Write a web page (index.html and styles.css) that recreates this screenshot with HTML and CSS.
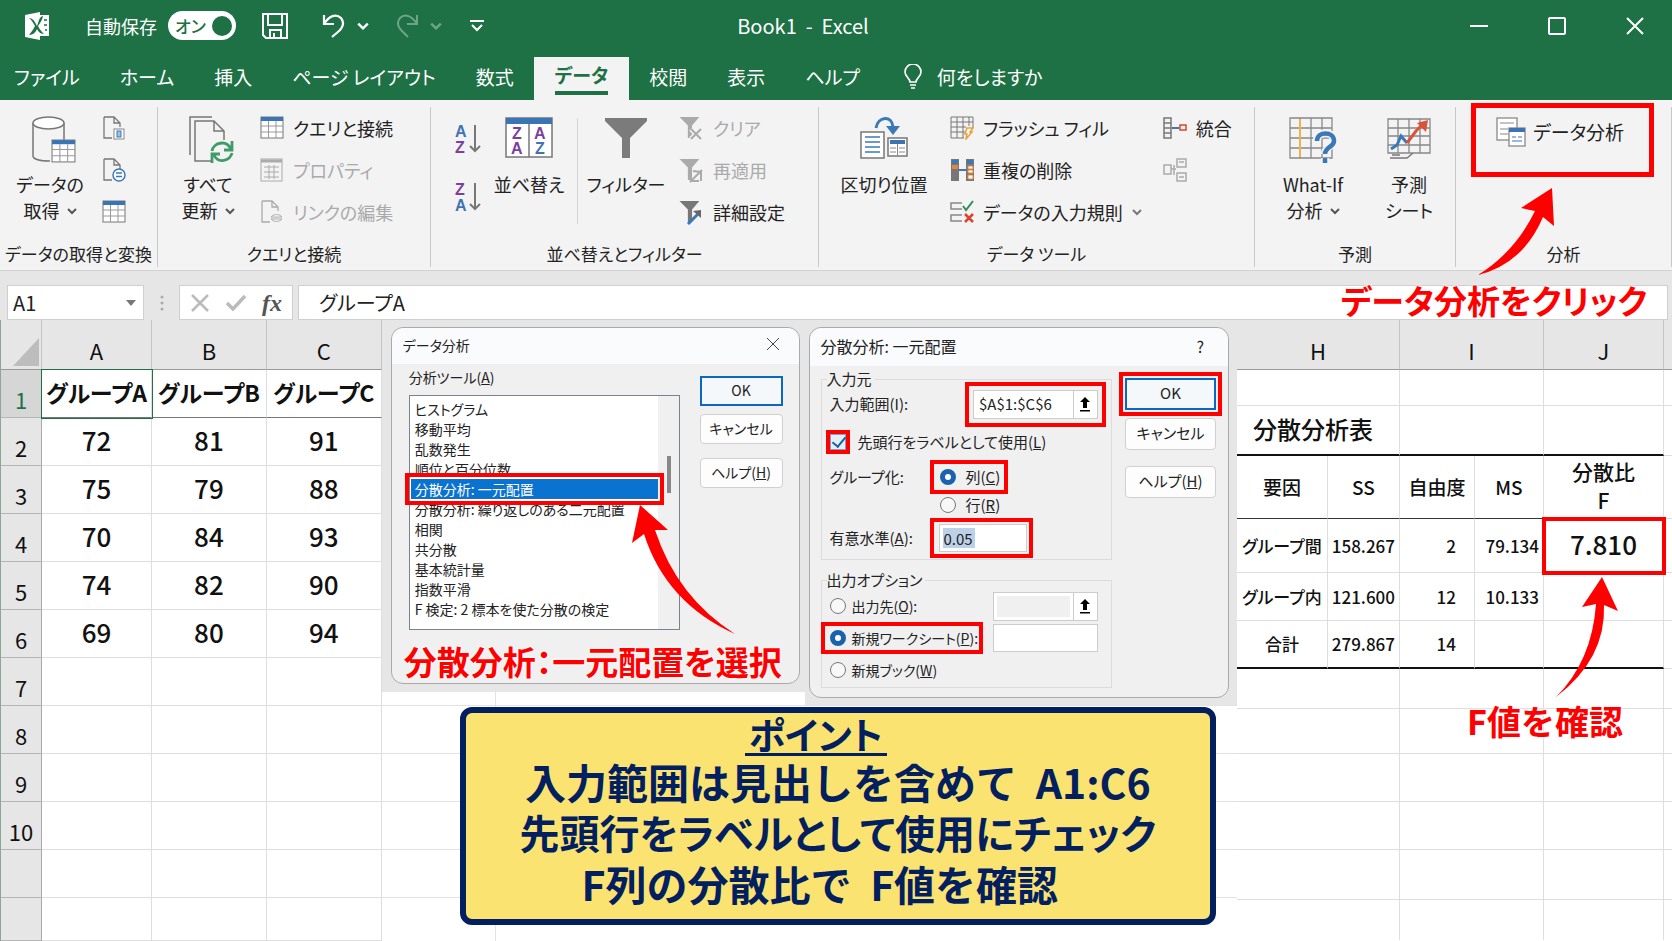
FILE: index.html
```html
<!DOCTYPE html>
<html lang="ja">
<head>
<meta charset="UTF-8">
<meta name="viewport" content="width=device-width, initial-scale=1.0">
<title>Book1 - Excel</title>
<link rel="stylesheet" href="styles.css">
</head>
<body>
<!-- shared icons -->
<svg class="defs" width="0" height="0">
    <symbol id="chev" viewBox="0 0 10 8"><path d="M1 2l4 4 4-4" fill="none" stroke="currentColor" stroke-width="2"/></symbol>
    <symbol id="table" viewBox="0 0 24 24">
        <rect x="1" y="1" width="22" height="21" fill="#fff" stroke="#777"/>
        <path d="M1 10h22M1 16h22M8.500 5v17M16 5v17" stroke="#999" fill="none"/>
        <rect x="1" y="1" width="22" height="4" fill="#3b74b5"/>
    </symbol>
    <symbol id="page" viewBox="0 0 24 24"><path d="M2 1h10l6 6v4M12 1v6h6M2 1v21h8" fill="none" stroke="currentColor" stroke-width="1.300"/></symbol>
    <symbol id="funnel" viewBox="0 0 24 24"><path d="M1 1h19l-7 8v12H9V9z" fill="currentColor"/></symbol>
    <symbol id="up" viewBox="0 0 14 16"><path d="M7 1l5 5H9v6H5V6H2zM2 14h10v1.500H2z" fill="#000"/></symbol>
</svg>

<header class="top">
    <div class="titlebar">
        <svg class="logo" width="26" height="28" viewBox="0 0 26 28"><path d="M1 3L16 0v3h9v21h-9v4L1 25z" fill="#fff"/><path d="M5 6c4 0 6 4 8 8 2-5 2-9 6-10-1 5-3 7-5 10 2 4 4 6 6 8-4 0-6-3-7-5-1 3-4 6-8 6 2-3 4-5 6-9C9 11 8 8 5 6z" fill="#1e7145"/><path d="M20 8h3M20 13h3M21 18h2" stroke="#1e7145" stroke-width="1.500"/></svg>
        <span class="autosave">自動保存</span>
        <button class="toggle" aria-pressed="true">オン<span class="knob"></span></button>
        <button class="quick save" aria-label="上書き保存"><svg width="26" height="26" viewBox="0 0 26 26" fill="none" stroke="#fff" stroke-width="2"><path d="M1 1h24v24H4l-3-3z"/><path d="M6 1v11h14V1M8 25v-8h11v8M12 20v5"/></svg></button>
        <button class="quick" aria-label="元に戻す"><svg width="24" height="26" viewBox="0 0 24 26" fill="none" stroke="#fff" stroke-width="2.200"><path d="M2 2v9h10"/><path d="M2 11C7 3 14 0 19 5c4 5 2 9-2 13l-7 6"/></svg></button>
        <button class="quick arrow" aria-label="元に戻す一覧"><svg width="12" height="10"><use href="#chev"/></svg></button>
        <button class="quick redo" aria-label="やり直し" disabled><svg width="24" height="26" viewBox="0 0 24 26" fill="none" stroke="#6fa486" stroke-width="2"><path d="M22 2v9H12"/><path d="M22 11C17 3 10 0 5 5c-4 5-2 9 2 13l6 6"/></svg></button>
        <button class="quick arrow" aria-label="やり直し一覧" disabled><svg width="12" height="10"><use href="#chev"/></svg></button>
        <button class="quick more" aria-label="クイック アクセスのカスタマイズ"><svg width="14" height="14" viewBox="0 0 14 14" fill="none" stroke="#fff" stroke-width="2"><path d="M0 2h14M2 6l5 5 5-5"/></svg></button>
        <div class="book">Book1&nbsp; -&nbsp; Excel</div>
        <div class="winbuttons">
            <button aria-label="最小化"><svg width="18" height="18"><path d="M0 9h18" stroke="#fff" stroke-width="2"/></svg></button>
            <button aria-label="最大化"><svg width="18" height="18"><rect x="1" y="1" width="16" height="16" rx="1" fill="none" stroke="#fff" stroke-width="2"/></svg></button>
            <button aria-label="閉じる"><svg width="18" height="18"><path d="M1 1l16 16M17 1L1 17" stroke="#fff" stroke-width="2"/></svg></button>
        </div>
    </div>
    <nav class="tabs">
        <a href="#">ファイル</a>
        <a href="#">ホーム</a>
        <a href="#">挿入</a>
        <a href="#">ページ レイアウト</a>
        <a href="#">数式</a>
        <a href="#" class="active"><span>データ</span></a>
        <a href="#">校閲</a>
        <a href="#">表示</a>
        <a href="#">ヘルプ</a>
        <a href="#" class="tell"><svg width="18" height="25" viewBox="0 0 18 25" fill="none" stroke="#fff" stroke-width="1.600"><path d="M6 18c0-4-5-5-5-10a8 8 0 0 1 16 0c0 5-5 6-5 10zM6 21h6M7 24h4"/></svg>何をしますか</a>
    </nav>
</header>

<section class="ribbon">
    <div class="group get">
        <div class="tools">
            <button class="big">
                <svg width="44" height="48" viewBox="0 0 44 48"><path d="M1 7v33c0 3 7 5 17 5M32 7v17" fill="none" stroke="#777" stroke-width="1.500"/><ellipse cx="16.500" cy="7" rx="15.500" ry="6" fill="#fff" stroke="#777" stroke-width="1.500"/><svg x="19" y="23" width="25" height="25"><use href="#table"/></svg></svg>
                <span>データの</span><span>取得 <svg class="chev" width="10" height="8"><use href="#chev"/></svg></span>
            </button>
            <div class="list">
                <button aria-label="テキストから"><svg width="24" height="24" viewBox="0 0 24 24"><use href="#page"/><rect x="12" y="13" width="10" height="10" fill="#fff" stroke="#888"/><rect x="15" y="15" width="4" height="6" fill="#9cc3ea" stroke="#3b78b8"/></svg></button>
                <button aria-label="Web から"><svg width="24" height="24" viewBox="0 0 24 24"><use href="#page"/><circle cx="17" cy="17" r="6" fill="#fff" stroke="#3b78b8" stroke-width="1.500"/><path d="M14 15h6M14 18.500h6" stroke="#3b78b8" stroke-width="1.500"/></svg></button>
                <button aria-label="テーブルから"><svg width="24" height="24"><use href="#table"/></svg></button>
            </div>
        </div>
        <div class="caption">データの取得と変換</div>
    </div>

    <div class="group query">
        <div class="tools">
            <button class="big">
                <svg width="46" height="48" viewBox="0 0 46 48" fill="none" stroke="#777" stroke-width="1.500"><path d="M1 39V1h22"/><path d="M22 45H6V5h19l10 10v9M25 5v10h10"/><path d="M23 35c1-8 14-12 19-2M43 25v9h-8M43 37c-2 8-14 11-18 2M23 47v-9h8" stroke="#3f9b68" stroke-width="2.800"/></svg>
                <span>すべて</span><span>更新 <svg class="chev" width="10" height="8"><use href="#chev"/></svg></span>
            </button>
            <div class="list">
                <button><svg width="24" height="24"><use href="#table"/></svg>クエリと接続</button>
                <button disabled><svg width="24" height="24" viewBox="0 0 24 24" fill="none" stroke="#aaa"><rect x="1" y="1" width="21" height="22"/><path d="M1 3h21" stroke-width="3"/><path d="M4 9h15M4 14h15M4 19h15M9 7v14M14 7v14"/></svg>プロパティ</button>
                <button disabled><svg width="24" height="24" viewBox="0 0 24 24"><use href="#page"/><path d="M11 17a6 4 0 0 1 11 0zM11 19a6 4 0 0 0 11 0z" fill="#fff" stroke="#aaa"/></svg>リンクの編集</button>
            </div>
        </div>
        <div class="caption">クエリと接続</div>
    </div>

    <div class="group sort">
        <div class="tools">
            <div class="list orders">
                <button aria-label="昇順"><svg width="26" height="32" viewBox="0 0 26 32"><text x="0" y="14" fill="#3f74b5">A</text><text x="0" y="30" fill="#7b3fa0">Z</text><path d="M20 2v26M15 23l5 5 5-5" fill="none" stroke="#777" stroke-width="2"/></svg></button>
                <button aria-label="降順"><svg width="26" height="32" viewBox="0 0 26 32"><text x="0" y="14" fill="#7b3fa0">Z</text><text x="0" y="30" fill="#3f74b5">A</text><path d="M20 2v26M15 23l5 5 5-5" fill="none" stroke="#777" stroke-width="2"/></svg></button>
            </div>
            <button class="big">
                <svg width="48" height="48" viewBox="0 0 48 48"><rect x="1" y="2" width="46" height="39" fill="#fff" stroke="#777" stroke-width="1.500"/><path d="M1 5h46" stroke="#3b74b5" stroke-width="6"/><path d="M24 8v33" stroke="#777" stroke-width="1.500"/><text x="7" y="23" fill="#7b3fa0">Z</text><text x="6" y="38" fill="#7b3fa0">A</text><text x="29" y="23" fill="#7b3fa0">A</text><text x="30" y="38" fill="#3f74b5">Z</text></svg>
                <span>並べ替え</span>
            </button>
            <span class="rule"></span>
            <button class="big">
                <svg width="44" height="48" viewBox="0 0 44 48"><path d="M1 2h42v3L26 22v20h-8V22L1 5z" fill="#7b7b7b"/></svg>
                <span>フィルター</span>
            </button>
            <div class="list filters">
                <button disabled><svg width="26" height="25" viewBox="0 0 26 25"><use href="#funnel"/><path d="M13 13l10 10M23 13L13 23" stroke="#f3f3f3" stroke-width="5"/><path d="M13 13l10 10M23 13L13 23" stroke="#aaa" stroke-width="2"/></svg>クリア</button>
                <button disabled><svg width="26" height="25" viewBox="0 0 26 25"><use href="#funnel"/><path d="M12 24l12-12M15 13l8 1v9M13 16v7h8" fill="none" stroke="#aaa" stroke-width="2"/></svg>再適用</button>
                <button><svg width="26" height="25" viewBox="0 0 26 25"><use href="#funnel"/><path d="M10 24L21 13" stroke="#3b78b8" stroke-width="3"/><path d="M15 11l8-1v8z" fill="#666"/></svg>詳細設定</button>
            </div>
        </div>
        <div class="caption">並べ替えとフィルター</div>
    </div>

    <div class="group datatools">
        <div class="tools">
            <button class="big">
                <svg width="48" height="48" viewBox="0 0 48 48" fill="none"><path d="M16 12C18 0 32-1 33 11" stroke="#3b78b8" stroke-width="3"/><path d="M26 10h14l-7 9z" fill="#3b78b8"/><rect x="1" y="16" width="23" height="26" fill="#fff" stroke="#777" stroke-width="1.500"/><path d="M5 21h15M5 26h15M5 31h15M5 36h15" stroke="#3b78b8" stroke-width="1.500"/><rect x="28" y="22" width="19" height="18" fill="#fff" stroke="#777" stroke-width="1.500"/><path d="M30 26h15" stroke="#3b74b5" stroke-width="4"/><path d="M30 32h6M39 32h6M30 36h6M39 36h6M37.500 28v11" stroke="#888"/></svg>
                <span>区切り位置</span>
            </button>
            <div class="list">
                <button><svg width="24" height="24" viewBox="0 0 24 24" fill="none" stroke="#777"><path d="M1 1h22v11M14 22H1V1M1 6h22M1 11h15M1 16h14M7 1v21M13 1v21M19 1v9"/><path d="M17 12h6l-3 4h2l-6 7 1-5h-2z" fill="#fff" stroke="#eaa13b" stroke-width="1.500"/></svg>フラッシュ フィル</button>
                <button><svg width="24" height="24" viewBox="0 0 24 24"><path d="M1 1h8v22H1zM16 1h8v22h-8z" fill="#777"/><path d="M2 2h6v4H2zM17 2h6v4h-6z" fill="#3b78b8"/><path d="M2 7h6v4H2z" fill="#e8833a"/><path d="M18 8h5v3h-5zM18 12h5v3h-5zM18 17h5v4h-5z" fill="#fff" stroke="#e8833a"/><path d="M9 12h7" stroke="#3b78b8" stroke-width="2"/></svg>重複の削除</button>
                <button><svg width="24" height="24" viewBox="0 0 24 24" fill="none"><path d="M12 3H1v6h11M12 15H1v6h11" stroke="#888" stroke-width="1.500"/><path d="M13 6l3 4 7-9" stroke="#2f8f57" stroke-width="2"/><path d="M15 14l8 8M23 14l-8 8" stroke="#d9462f" stroke-width="2.500"/></svg>データの入力規則 <svg class="chev" width="10" height="8"><use href="#chev"/></svg></button>
            </div>
            <div class="list">
                <button><svg width="24" height="24" viewBox="0 0 24 24" fill="none"><path d="M1 2h7v20H1zM1 7h7M1 12h7M1 17h7" stroke="#777" stroke-width="1.500"/><path d="M9 12h7" stroke="#3b78b8" stroke-width="2"/><rect x="17" y="9" width="6" height="5" stroke="#d9462f" stroke-width="1.500"/></svg>統合</button>
                <button disabled aria-label="リレーションシップ"><svg width="24" height="24" viewBox="0 0 24 24" fill="none" stroke="#aaa" stroke-width="1.500"><rect x="1" y="7" width="7" height="9"/><rect x="14" y="1" width="9" height="8"/><rect x="14" y="15" width="9" height="8"/><path d="M8 11h5M11 7v10M16 4h5M16 19h5"/></svg></button>
            </div>
        </div>
        <div class="caption">データ ツール</div>
    </div>

    <div class="group forecast">
        <div class="tools">
            <button class="big">
                <svg width="48" height="48" viewBox="0 0 48 48" fill="none"><path d="M1 2h42v40H1zM1 12h42M1 22h42M1 32h42M11 2v40M22 2v40M33 2v40" stroke="#888" stroke-width="1.300"/><path d="M11 3v38" stroke="#f0b04e" stroke-width="2"/><path d="M28 24c0-9 17-9 17 0 0 6-9 6-9 14M36 42v5" stroke="#f3f3f3" stroke-width="8"/><path d="M28 25c0-10 17-10 17 0 0 6-9 6-9 13M36 42v5" stroke="#3b78b8" stroke-width="4.500"/></svg>
                <span>What-If</span><span>分析 <svg class="chev" width="10" height="8"><use href="#chev"/></svg></span>
            </button>
            <button class="big narrow">
                <svg width="44" height="48" viewBox="0 0 44 48" fill="none"><path d="M1 3h42v34H1zM1 12h42M1 20h42M1 29h42M11 3v34M22 3v34M33 3v34" stroke="#888" stroke-width="1.300"/><path d="M4 33l6-4 4-9 6 7" stroke="#3b78b8" stroke-width="3"/><path d="M20 27l9-12 8-8" stroke="#d9533a" stroke-width="3"/><path d="M30 7l11-3-2 12z" fill="#d9533a"/><path d="M3 42h17l6-5M5 39h8" stroke="#777" stroke-width="1.500"/></svg>
                <span>予測</span><span>シート</span>
            </button>
        </div>
        <div class="caption">予測</div>
    </div>

    <div class="group analysis">
        <div class="tools">
            <button class="analyze"><svg width="30" height="30" viewBox="0 0 30 30" fill="none"><rect x="1" y="1" width="20" height="22" fill="#fff" stroke="#888" stroke-width="1.300"/><path d="M4 6h14M4 12h8M4 17h8" stroke="#888"/><rect x="13" y="11" width="16" height="18" fill="#fff" stroke="#888" stroke-width="1.300"/><path d="M13 13h16" stroke="#3b74b5" stroke-width="4"/><path d="M16 20h4M22 20h4M16 24h10" stroke="#3b74b5"/></svg>データ分析</button>
        </div>
        <div class="caption">分析</div>
        <svg class="pointer to-analysis" width="78" height="90" viewBox="0 0 78 90"><path d="M74 0L43 20l14 3Q37 64 0 87 45 76 65 29l11 9z"/></svg>
    </div>
</section>

<section class="formulabar">
    <div class="namebox"><input type="text" value="A1" aria-label="名前ボックス"><svg width="10" height="6"><path d="M0 0h10L5 6z" fill="#777"/></svg></div>
    <svg class="dots" width="4" height="18" fill="#aaa"><circle cx="2" cy="3" r="1.500"/><circle cx="2" cy="9" r="1.500"/><circle cx="2" cy="15" r="1.500"/></svg>
    <div class="fxbox">
        <button aria-label="キャンセル"><svg width="20" height="18"><path d="M2 1l16 16M18 1L2 17" stroke="#bbb" stroke-width="2.500"/></svg></button>
        <button aria-label="入力"><svg width="22" height="18"><path d="M2 9l6 6L20 2" fill="none" stroke="#bbb" stroke-width="3.500"/></svg></button>
        <button class="fx">fx</button>
    </div>
    <input class="formula" type="text" value="グループA" aria-label="数式バー">
    <div class="note note-analysis">データ分析をクリック</div>
</section>

<main class="sheet">
    <table class="cells">
        <thead>
            <tr><th class="corner"><svg width="26" height="28"><path d="M26 0v28H0z" fill="#bdbdbd"/></svg></th><th>A</th><th>B</th><th>C</th></tr>
        </thead>
        <tbody>
            <tr class="first"><th>1</th><td class="selected">グループA</td><td>グループB</td><td>グループC</td></tr>
            <tr><th>2</th><td>72</td><td>81</td><td>91</td></tr>
            <tr><th>3</th><td>75</td><td>79</td><td>88</td></tr>
            <tr><th>4</th><td>70</td><td>84</td><td>93</td></tr>
            <tr><th>5</th><td>74</td><td>82</td><td>90</td></tr>
            <tr><th>6</th><td>69</td><td>80</td><td>94</td></tr>
            <tr><th>7</th><td></td><td></td><td></td></tr>
            <tr><th>8</th><td></td><td></td><td></td></tr>
            <tr><th>9</th><td></td><td></td><td></td></tr>
            <tr><th>10</th><td></td><td></td><td></td></tr>
            <tr><th></th><td></td><td></td><td></td></tr>
            <tr class="last"><th></th><td></td><td></td><td></td></tr>
        </tbody>
    </table>

    <div class="middle">
        <div class="windows">
            <div class="backdrop one">
                <div class="dialog">
                    <div class="dialog-title">データ分析<button aria-label="閉じる"><svg width="14" height="14"><path d="M1 1l12 12M13 1L1 13" stroke="#444"/></svg></button></div>
                    <div class="dialog-body">
                        <div class="chooser">
                            <div id="tools-label">分析ツール(<u>A</u>)</div>
                            <div class="listbox">
                                <ul role="listbox" aria-labelledby="tools-label">
                                    <li role="option">ヒストグラム</li>
                                    <li role="option">移動平均</li>
                                    <li role="option">乱数発生</li>
                                    <li role="option">順位と百分位数</li>
                                    <li role="option" class="picked" aria-selected="true">分散分析: 一元配置</li>
                                    <li role="option">分散分析: 繰り返しのある二元配置</li>
                                    <li role="option">相関</li>
                                    <li role="option">共分散</li>
                                    <li role="option">基本統計量</li>
                                    <li role="option">指数平滑</li>
                                    <li role="option">F 検定: 2 標本を使た分散の検定</li>
                                </ul>
                                <div class="scroll"><span></span></div>
                            </div>
                        </div>
                        <div class="actions">
                            <button class="default">OK</button>
                            <button>キャンセル</button>
                            <button class="help">ヘルプ(<u>H</u>)</button>
                        </div>
                    </div>
                    <div class="note note-choose">分散分析：一元配置を選択</div>
                    <svg class="pointer to-list" width="104" height="130" viewBox="0 0 104 130"><path d="M8 0L0 38l12-9Q34 98 103 129 45 92 23 25h13z"/></svg>
                </div>
            </div>

            <div class="backdrop two">
                <div class="dialog anova">
                    <div class="dialog-title">分散分析: 一元配置<button aria-label="ヘルプ">?</button></div>
                    <div class="dialog-body">
                        <div class="options">
                            <fieldset>
                                <legend>入力元</legend>
                                <div class="row range">
                                    <label for="range">入力範囲(I):</label>
                                    <span class="ref marked"><input id="range" type="text" value="$A$1:$C$6"><button aria-label="範囲を選択"><svg width="14" height="16"><use href="#up"/></svg></button></span>
                                </div>
                                <div class="row labels"><input class="marked" id="labels" type="checkbox" checked><label for="labels">先頭行をラベルとして使用(<u>L</u>)</label></div>
                                <div class="row by"><span class="name">グループ化:</span><label class="choice marked"><input type="radio" name="by" checked><span>列(<u>C</u>)</span></label></div>
                                <div class="row by rows"><span class="name"></span><label class="choice"><input type="radio" name="by"><span>行(<u>R</u>)</span></label></div>
                                <div class="row alpha"><label class="name" for="alpha">有意水準(<u>A</u>):</label><span class="level marked"><input id="alpha" type="text" value="0.05"></span></div>
                            </fieldset>
                            <fieldset class="output">
                                <legend>出力オプション</legend>
                                <div class="row"><label><input type="radio" name="out">出力先(<u>O</u>):</label><span class="ref dim"><input type="text" aria-label="出力先"><button aria-label="出力先を選択"><svg width="14" height="16"><use href="#up"/></svg></button></span></div>
                                <div class="row"><label class="marked"><input type="radio" name="out" checked>新規ワークシート(<u>P</u>):</label><input class="sheetname" type="text" aria-label="シート名"></div>
                                <div class="row"><label><input type="radio" name="out">新規ブック(<u>W</u>)</label></div>
                            </fieldset>
                        </div>
                        <div class="actions">
                            <button class="default marked">OK</button>
                            <button>キャンセル</button>
                            <button class="help">ヘルプ(<u>H</u>)</button>
                        </div>
                    </div>
                </div>
            </div>
        </div>

        <div class="point">
            <h2><span>ポイント</span></h2>
            <p class="wide">入力範囲は見出しを含めて&nbsp; A1:C6</p>
            <p>先頭行をラベルとして使用にチェック</p>
            <p class="wide check">F列の分散比で&nbsp; F値を確認</p>
        </div>
    </div>

    <div class="result">
        <table class="anova-table">
            <colgroup><col class="c1"><col class="c2"><col class="c3"><col class="c4"><col class="c5"><col class="c6"></colgroup>
            <thead>
                <tr><th colspan="2">H</th><th colspan="2">I</th><th>J</th><th></th></tr>
            </thead>
            <tbody>
                <tr class="h36"><td colspan="2"></td><td colspan="2"></td><td></td><td></td></tr>
                <tr class="h50 heading"><td colspan="2">分散分析表</td><td colspan="2"></td><td></td><td></td></tr>
                <tr class="h63 names"><td>要因</td><td>SS</td><td>自由度</td><td>MS</td><td class="ratio">分散比<br>F</td><td></td></tr>
                <tr class="h54 data"><td>グループ間</td><td>158.267</td><td>2</td><td>79.134</td><td class="fvalue marked">7.810</td><td></td></tr>
                <tr class="h48 data"><td>グループ内</td><td>121.600</td><td>12</td><td>10.133</td><td></td><td></td></tr>
                <tr class="h48 data total"><td>合計</td><td>279.867</td><td>14</td><td></td><td></td><td></td></tr>
                <tr class="h40"><td colspan="2"></td><td colspan="2"></td><td></td><td></td></tr>
                <tr class="h45"><td colspan="2"></td><td colspan="2"></td><td></td><td></td></tr>
                <tr class="h48"><td colspan="2"></td><td colspan="2"></td><td></td><td></td></tr>
                <tr class="h48"><td colspan="2"></td><td colspan="2"></td><td></td><td></td></tr>
                <tr class="h50"><td colspan="2"></td><td colspan="2"></td><td></td><td></td></tr>
                <tr class="h40 end"><td colspan="2"></td><td colspan="2"></td><td></td><td></td></tr>
            </tbody>
        </table>
        <svg class="pointer to-f" width="64" height="122" viewBox="0 0 64 122"><path d="M46 0L26 30l14-3Q36 84 0 120 50 82 48 28l14 6z"/></svg>
        <div class="note note-f">F値を確認</div>
    </div>
</main>
</body>
</html>
```

FILE: styles.css
```css
* {
    box-sizing: border-box;
}

body {
    margin: 0;
    min-height: 100vh;
    display: flex;
    flex-direction: column;
    background: #fff;
    color: #222;
    font-family: "Noto Sans CJK JP", sans-serif;
    font-size: 18px;
    font-feature-settings: "palt";
    overflow-x: hidden;
}

.defs {
    position: absolute;
}

button, input {
    font: inherit;
    font-feature-settings: inherit;
    color: inherit;
    margin: 0;
    padding: 0;
    border: 0;
    background: none;
}

svg {
    flex: none;
}

svg text {
    font-family: "Liberation Sans", sans-serif;
    font-size: 16px;
    font-weight: bold;
}

/* red annotations */
.marked {
    outline: 4px solid #f00;
}

.note {
    color: #f00;
    font-size: 33px;
    line-height: 40px;
    font-weight: 700;
    white-space: nowrap;
    text-shadow: 0 0 3px #fff, 0 0 3px #fff;
}

.pointer {
    position: absolute;
    fill: #f00;
    z-index: 2;
}

/* title bar and tabs */
.top {
    background: #1e7145;
    color: #fff;
}

.titlebar {
    position: relative;
    display: flex;
    align-items: center;
    height: 57px;
    padding: 0 28px 6px 24px;
}

.autosave {
    margin-left: 35px;
    white-space: nowrap;
}

.toggle {
    display: flex;
    align-items: center;
    gap: 6px;
    width: 68px;
    height: 29px;
    margin-left: 11px;
    padding-left: 7px;
    border-radius: 15px;
    background: #fff;
    color: #1e7145;
    font-size: 17px;
    font-weight: 500;
    white-space: nowrap;
}

.knob {
    flex: none;
    width: 20px;
    height: 20px;
    border-radius: 50%;
    background: #1e7145;
}

.quick {
    display: flex;
    margin-left: 34px;
    color: #fff;
}

.quick.save {
    margin-left: 26px;
}

.quick.arrow {
    margin-left: 11px;
}

.quick.redo {
    margin-left: 26px;
}

.quick:disabled {
    color: #6fa486;
}

.quick.more {
    margin-left: 28px;
}

.book {
    position: absolute;
    left: 0;
    right: 0;
    width: max-content;
    padding-right: 66px;
    margin: auto;
    font-size: 20px;
}

.winbuttons {
    display: flex;
    gap: 60px;
    margin-left: auto;
}

.winbuttons svg {
    display: block;
}

.tabs {
    display: flex;
    height: 43px;
}

.tabs a {
    display: flex;
    align-items: center;
    padding: 0 20px 4px;
    color: #fff;
    font-size: 19px;
    line-height: 36px;
    text-decoration: none;
    white-space: nowrap;
}

.tabs a:first-child {
    padding-left: 14px;
}

.tabs .active {
    padding: 0 21px 4px;
    background: #f3f3f3;
    color: #1e7145;
    font-weight: 700;
}

.active span {
    line-height: 32px;
    border-bottom: 4px solid #1e7145;
}

.tabs .tell {
    gap: 15px;
    padding-left: 24px;
}

/* ribbon */
.ribbon {
    display: grid;
    grid-template-columns: 158fr 273fr 388fr 436fr 201fr 216fr;
    padding: 7px 0 3px;
    background: #f3f3f3;
    border-bottom: 1px solid #d2d2d2;
}

.group {
    position: relative;
    border-right: 1px solid #c8c8c8;
    min-width: 0;
}

.tools {
    display: flex;
    height: 134px;
    gap: 16px;
    padding-left: 14px;
}

.caption {
    line-height: 26px;
    font-size: 17px;
    text-align: center;
    white-space: nowrap;
}

.big {
    display: flex;
    flex-direction: column;
    align-items: center;
    flex: none;
    width: 72px;
    padding-top: 9px;
    line-height: 26px;
    white-space: nowrap;
}

.big > svg {
    margin-bottom: 7px;
}

.get .big > svg, .query .big > svg {
    margin-left: 8px;
}

.chev {
    color: #555;
    margin-left: 3px;
    vertical-align: 3px;
}

.list {
    flex: none;
    display: flex;
    flex-direction: column;
}

.list button {
    display: flex;
    align-items: center;
    gap: 9px;
    height: 42px;
    white-space: nowrap;
    color: #222;
}

.list button svg {
    color: #777;
}

.list button:disabled, .list button:disabled svg {
    color: #aaa;
}

.list .chev {
    margin-left: 0;
}

.sort .tools {
    gap: 8px;
    padding-left: 24px;
}

.sort .big {
    width: 80px;
}

.orders {
    padding-top: 4px;
    gap: 2px;
}

.list.orders button {
    height: 56px;
}

.filters {
    margin-left: 4px;
}

.rule {
    width: 1px;
    height: 106px;
    margin-top: 11px;
    background: #d5d5d5;
}

.datatools .tools {
    gap: 21px;
    padding-left: 20px;
}

.datatools .big {
    width: 90px;
}

.forecast .tools {
    gap: 26px;
    padding-left: 18px;
}

.forecast .big {
    width: 80px;
}

.forecast .narrow {
    width: 60px;
}

.analysis .tools {
    padding: 1px 22px 0 20px;
}

.analyze {
    display: flex;
    align-items: flex-start;
    gap: 7px;
    flex: 1;
    height: 64px;
    padding: 9px 0 0 20px;
    line-height: 30px;
    font-size: 19px;
    white-space: nowrap;
    outline: 5px solid #f00;
}

.to-analysis {
    right: 115px;
    top: 81px;
}

/* formula bar */
.formulabar {
    position: relative;
    display: flex;
    align-items: center;
    height: 49px;
    padding: 14px 4px 0 7px;
    background: #e6e6e6;
    font-size: 20px;
}

.namebox, .fxbox, .formula {
    height: 35px;
    background: #fff;
    border: 1px solid #cfcfcf;
}

.namebox {
    display: flex;
    align-items: center;
    width: 137px;
    padding: 0 7px 0 5px;
}

.namebox input {
    width: 100%;
    font-size: 20px;
}

.dots {
    margin: 0 15px 0 16px;
}

.fxbox {
    display: flex;
    align-items: center;
    justify-content: space-between;
    width: 114px;
    padding: 0 10px;
}

.fxbox svg {
    display: block;
}

.fx {
    font: italic bold 24px "Liberation Serif", serif;
    line-height: 30px;
    color: #555;
}

.formula {
    flex: 1;
    min-width: 0;
    margin-left: 5px;
    padding-left: 20px;
}

.note-analysis {
    position: absolute;
    right: 25px;
    top: 9px;
    z-index: 2;
}

/* worksheet */
.sheet {
    flex: 1;
    display: grid;
    grid-template-columns: 381fr 856fr 435fr;
    align-items: start;
    border-left: 1px solid #8aa79b;
}

table {
    width: 100%;
    table-layout: fixed;
    border-spacing: 0;
    color: #111;
}

td, th {
    padding: 0;
    border-right: 1px solid #dedede;
    border-bottom: 1px solid #dedede;
    text-align: center;
}

thead th {
    height: 50px;
    padding-top: 10px;
    background: #e6e6e6;
    border-right-color: #c4c4c4;
    border-bottom-color: #999;
    font-size: 22px;
    line-height: 30px;
    font-weight: 400;
}

.cells tr {
    height: 48px;
}

.cells .last {
    height: 43px;
}

.cells .corner {
    width: 41px;
    padding: 0 2px 3px 0;
    text-align: right;
    vertical-align: bottom;
    line-height: 0;
}

.cells th:nth-child(2) {
    width: 110px;
}

.cells tbody th {
    padding-top: 10px;
    background: #e6e6e6;
    border-right-color: #aaa;
    border-bottom-color: #b5b5b5;
    font-size: 22px;
    line-height: 30px;
    font-weight: 400;
}

.cells .first th {
    background: #d6d6d6;
    color: #1e7145;
}

.cells td {
    padding-bottom: 4px;
    font-size: 26px;
    line-height: 40px;
    font-weight: 500;
    white-space: nowrap;
}

.cells .first td {
    font-size: 23px;
    font-weight: 700;
    border-bottom-color: #777;
}

.cells .selected {
    outline: 1px solid #1e7145;
}

.middle {
    align-self: stretch;
    background:
        linear-gradient(#e2e2e2, #e2e2e2) 113px 0 / 1px 100% no-repeat,
        repeating-linear-gradient(transparent 0 47px, #e2e2e2 47px 48px) 0 50px;
}

.windows {
    display: flex;
    align-items: flex-start;
    height: 385px;
}

.backdrop {
    background: #e6e6e6;
    min-width: 0;
}

.one {
    flex: 422 1 0;
    padding: 7px 5px 8px 9px;
}

.two {
    flex: 434 1 0;
    padding: 7px 8px 7px 4px;
}

/* dialogs */
.dialog {
    position: relative;
    background: #f0f0f0;
    border: 1px solid #aaa;
    border-radius: 12px;
    color: #222;
    font-size: 14px;
    line-height: 20px;
    white-space: nowrap;
}

.dialog-title {
    display: flex;
    justify-content: space-between;
    align-items: center;
    height: 36px;
    padding: 0 19px 2px 11px;
    background: #fafbfd;
    border-radius: 12px 12px 0 0;
}

.dialog-body {
    display: flex;
    gap: 20px;
    padding: 3px 16px 0 17px;
}

.chooser {
    flex: 1;
    min-width: 0;
}

.listbox {
    display: flex;
    height: 235px;
    margin-top: 8px;
    background: #fff;
    border: 1px solid #7a8290;
}

.listbox ul {
    flex: 1;
    margin: 0;
    padding: 3px 0 0 1px;
    list-style: none;
}

.listbox li {
    padding-left: 4px;
}

.listbox .picked {
    position: relative;
    z-index: 1;
    background: #0a72cf;
    color: #fff;
    outline: 4px solid #f00;
    outline-offset: 2px;
}

.scroll {
    width: 21px;
    padding: 60px 0 0 9px;
    background: #f0f0f0;
}

.scroll span {
    display: block;
    width: 4px;
    height: 37px;
    background: #888;
}

.actions {
    display: flex;
    flex-direction: column;
    gap: 8px;
    width: 83px;
    padding-top: 9px;
}

.actions button {
    height: 30px;
    padding-bottom: 2px;
    background: #fdfdfd;
    border: 1px solid #d0d0d0;
    border-radius: 4px;
}

.actions .default {
    border: 2px solid #0a67c2;
    border-radius: 0;
    background: #f5f8fb;
}

.actions .help {
    margin-top: 6px;
}

.note-choose {
    height: 41px;
    margin: 11px 0 1px 12px;
}

.to-list {
    right: 63px;
    top: 177px;
}

.anova {
    font-size: 15px;
}

.anova .dialog-title {
    height: 38px;
    padding: 0 24px 2px 11px;
    font-size: 16px;
}

.anova .dialog-body {
    gap: 13px;
    padding: 3px 12px 9px 11px;
}

.options {
    flex: 1;
    min-width: 0;
}

fieldset {
    min-width: 0;
    margin: 0 0 10px;
    padding: 0 13px 4px 8px;
    border: 1px solid #dcdcdc;
}

.output {
    margin-bottom: 0;
    padding-bottom: 1px;
}

legend {
    padding: 0 3px 0 0;
    margin-left: -3px;
}

.row {
    display: flex;
    align-items: center;
    height: 32px;
}

.row.range {
    height: 30px;
    justify-content: space-between;
}

.row.labels {
    height: 46px;
    gap: 12px;
}

.row.by {
    height: 24px;
}

.row.rows {
    height: 32px;
}

.row.alpha {
    height: 34px;
}

.name {
    width: 104px;
}

.ref {
    display: flex;
    width: 125px;
    height: 29px;
    background: #fff;
    border: 1px solid #ccc;
}

.ref input {
    flex: 1;
    min-width: 0;
    padding-left: 5px;
}

.ref button {
    width: 24px;
    border-left: 1px solid #ccc;
}

.ref svg {
    display: block;
    margin: auto;
}

.ref.marked {
    outline-offset: 4px;
}

.ref.dim {
    width: 105px;
}

.dim input {
    margin: 3px;
    background: #f0f0f0;
}

input[type="checkbox"] {
    appearance: none;
    width: 16px;
    height: 16px;
    background: #e4effa;
    border: 1px solid #7fa3c8;
}

input[type="checkbox"]:checked::after {
    content: "";
    display: block;
    width: 6px;
    height: 11px;
    margin: -1px 0 0 4px;
    border: solid #1d5f9e;
    border-width: 0 2px 2px 0;
    transform: rotate(40deg);
}

input[type="radio"] {
    appearance: none;
    flex: none;
    width: 16px;
    height: 16px;
    border: 1px solid #777;
    border-radius: 50%;
    background: #f8f8f8;
}

input[type="radio"]:checked {
    border: 5px solid #1a62ad;
    background: #fff;
}

.choice {
    display: flex;
    align-items: center;
    gap: 10px;
    height: 26px;
    padding: 0 4px 0 6px;
}

.level {
    height: 32px;
    padding: 2px 2px 2px 5px;
}

.level input {
    width: 88px;
    height: 28px;
    padding-left: 4px;
    background: linear-gradient(#bcd0e8, #bcd0e8) 3px 3px / 32px 20px no-repeat #fff;
    border: 1px solid #ccc;
}

.output .row {
    justify-content: space-between;
}

.output label {
    display: flex;
    align-items: center;
    height: 24px;
    font-size: 14px;
}

.output label input {
    margin-right: 6px;
}

.output label.marked {
    margin-left: -5px;
    padding: 0 1px 0 5px;
}

.sheetname {
    width: 105px;
    height: 28px;
    background: #fff;
    border: 1px solid #ccc;
}

.anova .actions {
    width: 91px;
}

.anova .actions button {
    height: 32px;
}

.anova .actions .help {
    margin-top: 8px;
}

.anova .actions .marked {
    outline-offset: 2px;
}

/* summary box */
.point {
    height: 218px;
    margin: 2px 21px 0 78px;
    border: 6px solid #02205f;
    border-radius: 12px;
    background: #fbe371;
    color: #02205f;
    font-size: 40px;
    line-height: 51px;
    font-weight: 700;
    text-align: center;
    white-space: nowrap;
}

.point p {
    margin: 0;
}

.point .wide {
    font-size: 41px;
    font-feature-settings: normal;
}

.point h2 {
    margin: 0;
    padding-right: 44px;
    font-size: 37px;
    line-height: 42px;
}

.point h2 span {
    display: inline-block;
    height: 43px;
    padding: 0 4px;
    border-bottom: 3px solid #02205f;
}

.point .check {
    padding-right: 36px;
}

/* result table */
.result {
    position: relative;
}

.c1 { width: 91px; }
.c2 { width: 72px; }
.c3 { width: 75px; }
.c4 { width: 69px; }
.c5 { width: 120px; }
.c6 { width: 8px; }

.h36 { height: 36px; }
.h40 { height: 40px; }
.h45 { height: 45px; }
.h48 { height: 48px; }
.h50 { height: 50px; }
.h54 { height: 54px; }
.h63 { height: 63px; }

.anova-table td {
    line-height: 30px;
    font-weight: 500;
    white-space: nowrap;
}

.anova-table tr > :last-child {
    border-right: 0;
}

.anova-table .end td {
    border-bottom: 0;
}

.heading td:first-child {
    padding: 0 0 3px 16px;
    font-size: 24px;
    text-align: left;
}

.heading td:not(:last-child), .total td:not(:last-child) {
    border-bottom: 2px solid #111;
}

.names td {
    font-size: 19px;
}

.names td:not(:last-child) {
    border-bottom-color: #333;
}

.names .ratio {
    padding-bottom: 3px;
    font-size: 21px;
    line-height: 29px;
}

.data td {
    padding-right: 4px;
    font-size: 17px;
    text-align: right;
}

.data td:first-child {
    padding-right: 0;
    text-align: center;
}

.data td:nth-child(3) {
    padding-right: 18px;
}

.anova-table .fvalue {
    padding: 0 0 3px;
    font-size: 26px;
    text-align: center;
    outline-offset: -2px;
}

.to-f {
    right: 52px;
    top: 257px;
}

.note-f {
    position: absolute;
    right: 49px;
    top: 381px;
    font-size: 34px;
    font-feature-settings: normal;
}
```
